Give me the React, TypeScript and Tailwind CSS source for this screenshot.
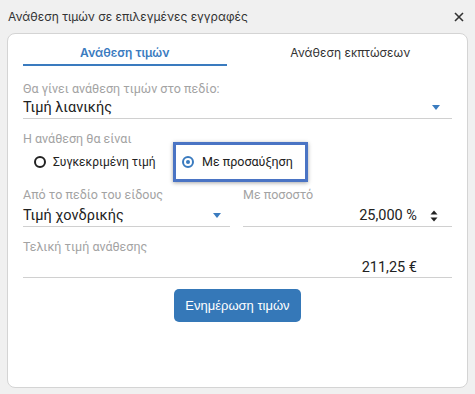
export default function App() {
  return (
    <div className="w-[475px] h-[394px] bg-[#f0f0f0] flex flex-col font-['Inter',sans-serif] overflow-hidden">
      <div className="flex items-center justify-between h-[33px] pl-[8px] pr-[10px] pt-[1px]">
        <span className="text-[12px] text-[#333]">Ανάθεση τιμών σε επιλεγμένες εγγραφές</span>
        <svg width="12" height="12" viewBox="0 0 12 12" className="text-[#333]">
          <path d="M2 2 L10 10 M10 2 L2 10" stroke="currentColor" strokeWidth="1.6" />
        </svg>
      </div>

      <div className="mx-[7px] h-[355px] bg-white border border-[#d4d4d4] rounded-[8px] px-[15px] font-['Roboto',sans-serif]">
        {/* tabs */}
        <div className="grid grid-cols-2 gap-[22px] pt-[11px]">
          <div className="text-center text-[12px] leading-[16px] font-semibold text-[#3a7bbf] font-['Inter',sans-serif] pb-[3px] border-b-[2px] border-[#3a7bbf]">
            Ανάθεση τιμών
          </div>
          <div className="text-center text-[12px] leading-[16px] text-[#333] font-['Inter',sans-serif] pb-[3px]">
            Ανάθεση εκπτώσεων
          </div>
        </div>

        <div className="pt-[15px]">
          <div className="text-[12.5px] text-[#a3a3a3] leading-[16px]">Θα γίνει ανάθεση τιμών στο πεδίο:</div>
          <div className="flex items-center justify-between h-[22px] border-b border-[#d0d0d0]">
            <span className="text-[14.5px] text-[#222]">Τιμή λιανικής</span>
            <span className="mr-[12px] w-0 h-0 border-l-[4px] border-r-[4px] border-t-[5px] border-l-transparent border-r-transparent border-t-[#3a7bbf]" />
          </div>
        </div>

        <div className="pt-[12px]">
          <div className="text-[12.5px] text-[#a3a3a3] leading-[16px]">Η ανάθεση θα είναι</div>
          <div className="flex items-center h-[40px] -mt-[5px] pl-[11px]">
            <div className="flex items-center gap-[7px] w-[139px]">
              <span className="w-[12px] h-[12px] rounded-full border-[2px] border-[#222]" />
              <span className="text-[12px] text-[#222]">Συγκεκριμένη τιμή</span>
            </div>
            <div className="flex items-center gap-[8px] h-[40px] w-[135px] pl-[6px] border-[3px] border-[#4a74c4] shadow-[0_1px_4px_rgba(0,0,0,0.35)]">
              <span className="w-[12px] h-[12px] rounded-full border-[2px] border-[#3a7bbf] flex items-center justify-center">
                <span className="w-[4px] h-[4px] rounded-full bg-[#3a7bbf]" />
              </span>
              <span className="text-[12.5px] text-[#222]">Με προσαύξηση</span>
            </div>
          </div>
        </div>

        <div className="grid grid-cols-[207px_1fr] gap-[13px] pt-[5px]">
          <div>
            <div className="text-[12.5px] text-[#a3a3a3] leading-[16px]">Από το πεδίο του είδους</div>
            <div className="flex items-center justify-between h-[24px] pt-[2px] border-b border-[#d0d0d0]">
              <span className="text-[14.5px] text-[#222]">Τιμή χονδρικής</span>
              <span className="mr-[9px] w-0 h-0 border-l-[4px] border-r-[4px] border-t-[5px] border-l-transparent border-r-transparent border-t-[#3a7bbf]" />
            </div>
          </div>
          <div>
            <div className="text-[12.5px] text-[#a3a3a3] leading-[16px]">Με ποσοστό</div>
            <div className="flex items-center justify-end h-[24px] pt-[2px] border-b border-[#d0d0d0] pr-[14px]">
              <span className="text-[14.5px] text-[#222]">25,000 %</span>
              <svg width="8" height="12" viewBox="0 0 8 12" className="ml-[13px] text-[#222]">
                <path d="M4 0.5 L7.5 4.5 H0.5 Z M4 11.5 L7.5 7.5 H0.5 Z" fill="currentColor" />
              </svg>
            </div>
          </div>
        </div>

        <div className="pt-[12px]">
          <div className="text-[12.5px] text-[#a3a3a3] leading-[16px]">Τελική τιμή ανάθεσης</div>
          <div className="flex items-center justify-end h-[23px] pt-[3px] border-b border-[#d0d0d0] pr-[35px]">
            <span className="text-[14.5px] text-[#222]">211,25 €</span>
          </div>
        </div>

        <div className="flex justify-center pt-[11px]">
          <button className="h-[33px] px-[11px] rounded-[5px] bg-[#3578b8] text-white text-[13px] font-['Liberation_Sans',sans-serif]">
            Ενημέρωση τιμών
          </button>
        </div>
      </div>
    </div>
  );
}
